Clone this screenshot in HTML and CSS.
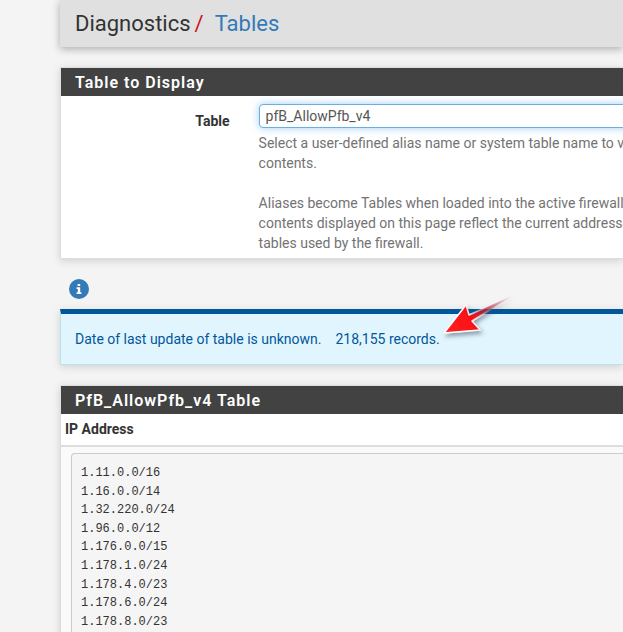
FILE: index.html
```html
<!DOCTYPE html>
<html lang="en">
<head>
<meta charset="utf-8">
<title>Diagnostics: Tables</title>
<link rel="stylesheet" href="styles.css">
</head>
<body>
<main class="page">
  <header class="page-header">
    <h1>Diagnostics<span class="slash">/</span><a href="#tables">Tables</a></h1>
  </header>

  <section class="panel">
    <h2 class="panel-heading">Table to Display</h2>
    <form class="form-row">
      <label class="form-label" for="table">Table</label>
      <div class="form-field">
        <select id="table" class="form-control">
          <option>pfB_AllowPfb_v4</option>
        </select>
        <p class="help">Select a user-defined alias name or system table name to view its<br>contents.<br><br>Aliases become Tables when loaded into the active firewall ruleset. The<br>contents displayed on this page reflect the current addresses inside the<br>tables used by the firewall.</p>
      </div>
    </form>
  </section>

  <button class="info-button" type="button" aria-label="Information">
    <svg viewBox="0 0 20 20" width="20" height="20" aria-hidden="true">
      <circle cx="10" cy="10" r="10" fill="#337ab7"/>
      <path fill="#fff" d="M8.6 5h2.6v2H8.6zM7.6 8.3h3.6v5h1.2v1.7H7.6v-1.7h1.2v-3.2H7.6z"/>
    </svg>
  </button>

  <div class="alert" role="status">
    <span>Date of last update of table is unknown.</span>
    <span class="records">218,155 records.
      <svg class="arrow" viewBox="0 0 80 56" width="80" height="56" aria-hidden="true">
        <defs>
          <linearGradient id="tail" gradientUnits="userSpaceOnUse" x1="6" y1="42" x2="76" y2="3">
            <stop offset="0" stop-color="#ff2424"/>
            <stop offset=".4" stop-color="#f80f14"/>
            <stop offset=".55" stop-color="#b51f36" stop-opacity=".9"/>
            <stop offset="1" stop-color="#e08080" stop-opacity=".1"/>
          </linearGradient>
          <linearGradient id="edge" gradientUnits="userSpaceOnUse" x1="6" y1="42" x2="66" y2="8">
            <stop offset=".4" stop-color="#fff"/>
            <stop offset=".8" stop-color="#fff" stop-opacity="0"/>
          </linearGradient>
          <filter id="shade" x="-20%" y="-20%" width="150%" height="160%">
            <feDropShadow dx="2" dy="3" stdDeviation="2" flood-color="#345" flood-opacity=".5"/>
          </filter>
        </defs>
        <path filter="url(#shade)" fill="url(#tail)" stroke="url(#edge)" stroke-width="1.5" stroke-linejoin="round" d="M6 42L28 14L31 24L74 5L34 30L42 39Z"/>
      </svg>
    </span>
  </div>

  <section class="panel">
    <h2 class="panel-heading">PfB_AllowPfb_v4 Table</h2>
    <table class="entries">
      <thead><tr><th>IP Address</th></tr></thead>
      <tbody><tr><td><pre>1.11.0.0/16
1.16.0.0/14
1.32.220.0/24
1.96.0.0/12
1.176.0.0/15
1.178.1.0/24
1.178.4.0/23
1.178.6.0/24
1.178.8.0/23</pre></td></tr></tbody>
    </table>
  </section>
</main>
</body>
</html>
```
FILE: styles.css
```css
* { box-sizing: border-box; }

body {
  margin: 0;
  overflow: hidden;
  background: #f4f4f4;
  color: #333;
  font: 14px/20px Roboto, "Liberation Sans", sans-serif;
}

a { color: #337ab7; text-decoration: none; }

.page { padding-left: 60px; }

.page-header {
  margin-bottom: 20px;
  padding: 9px 15px 8px;
  background: #e0e0e0;
  box-shadow: 0 2px 8px rgba(0, 0, 0, .3);
}

h1 {
  display: flex;
  margin: 0;
  font-size: 22px;
  font-weight: 400;
  line-height: 30px;
}

.slash { margin: 0 11px 0 4px; color: #c9151b; }

.panel {
  border: 1px solid #ddd;
  border-right: 0;
  background: #fff;
  box-shadow: 0 2px 8px rgba(0, 0, 0, .15);
}

.panel-heading {
  margin: 0;
  padding: 5px 14px 3px;
  background: #424242;
  color: #fff;
  font-size: 16px;
  font-weight: 600;
  letter-spacing: 1px;
  line-height: 20px;
}

.form-row {
  display: grid;
  grid-template-columns: 30% 1fr;
  column-gap: 29px;
  padding: 8px 0 5px;
}

.form-label {
  padding-top: 7px;
  font-weight: 700;
  text-align: right;
}

.form-field { min-width: 0; }

.form-control {
  display: block;
  width: 110%;
  height: 24px;
  padding: 0 6px;
  appearance: none;
  border: 1px solid #66afe9;
  border-radius: 4px;
  background: #fff;
  box-shadow: 0 0 8px rgba(102, 175, 233, .6);
  color: #555;
  font: inherit;
}

.help {
  margin: 5px 0 0;
  color: #737373;
  white-space: nowrap;
}

.info-button {
  display: block;
  margin: 20px 0 10px 9px;
  padding: 0;
  border: 0;
  background: none;
}

.info-button svg { display: block; }

.alert {
  display: flex;
  gap: 14px;
  margin-bottom: 20px;
  padding: 15px 14px;
  border: 1px solid #b8e4ea;
  border-top: 5px solid #01579b;
  border-right: 0;
  background: #e1f5fe;
  box-shadow: 0 2px 8px rgba(0, 0, 0, .15);
  color: #01579b;
}

.records { position: relative; }

.arrow {
  position: absolute;
  bottom: 2px;
  left: 100%;
  margin-left: -2px;
}

.entries { width: 100%; border-collapse: collapse; }

.entries th {
  padding: 5px 4px 6px;
  border-bottom: 2px solid #ddd;
  text-align: left;
}

.entries td {
  padding: 6px 0 0 10px;
  background: #fafafa;
}

.entries pre {
  margin: 0;
  padding: 10px 9px;
  border: 1px solid #ccc;
  border-right: 0;
  border-radius: 4px 0 0 4px;
  background: #f5f5f5;
  font-family: "Liberation Mono", monospace;
  font-size: 12px;
  line-height: 1.55;
}
```
